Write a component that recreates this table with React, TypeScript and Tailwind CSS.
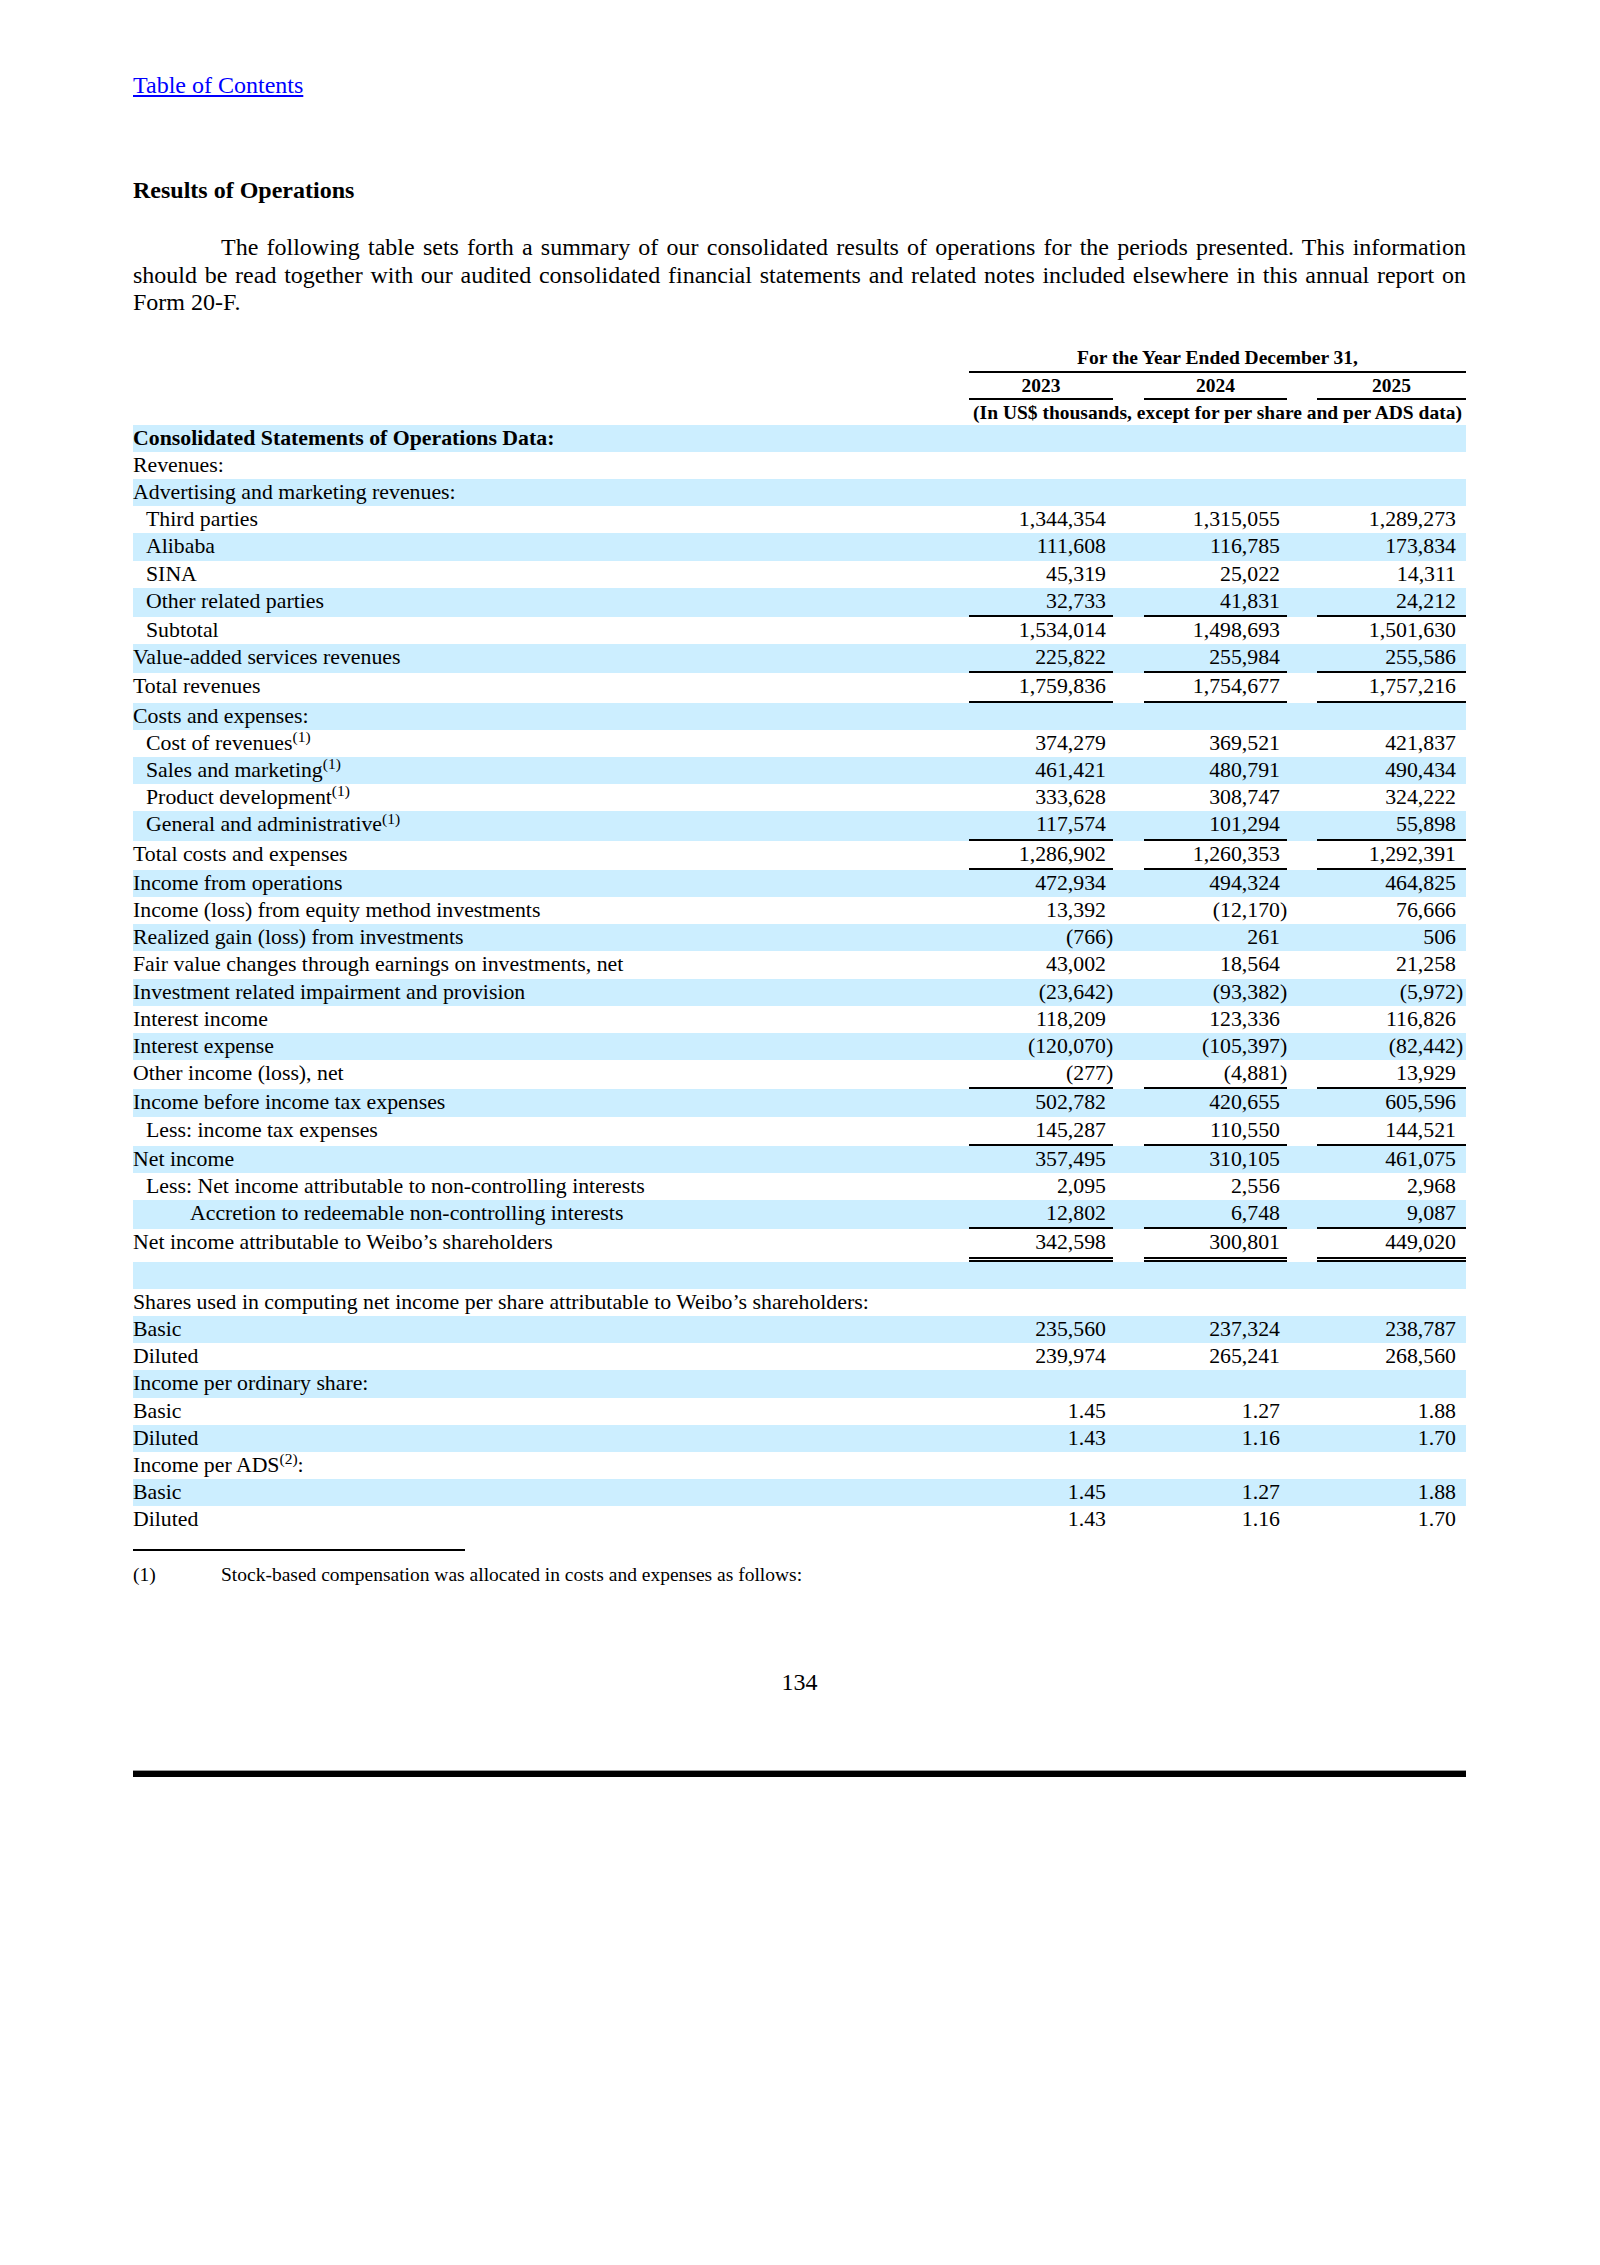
import React from 'react';

type Vals = [string, string, string];

interface Row {
  label?: React.ReactNode;
  indent?: 0 | 1 | 2;
  bold?: boolean;
  v?: Vals;
  line?: 'single' | 'double';
}

const Sup = ({ n }: { n: string }) => <sup className="text-[15.5px]">({n})</sup>;

const rows: Row[] = [
  { label: 'Consolidated Statements of Operations Data:', bold: true },
  { label: 'Revenues:' },
  { label: 'Advertising and marketing revenues:' },
  { label: 'Third parties', indent: 1, v: ['1,344,354', '1,315,055', '1,289,273'] },
  { label: 'Alibaba', indent: 1, v: ['111,608', '116,785', '173,834'] },
  { label: 'SINA', indent: 1, v: ['45,319', '25,022', '14,311'] },
  { label: 'Other related parties', indent: 1, v: ['32,733', '41,831', '24,212'], line: 'single' },
  { label: 'Subtotal', indent: 1, v: ['1,534,014', '1,498,693', '1,501,630'] },
  { label: 'Value-added services revenues', v: ['225,822', '255,984', '255,586'], line: 'single' },
  { label: 'Total revenues', v: ['1,759,836', '1,754,677', '1,757,216'], line: 'single' },
  { label: 'Costs and expenses:' },
  { label: <>Cost of revenues<Sup n="1" /></>, indent: 1, v: ['374,279', '369,521', '421,837'] },
  { label: <>Sales and marketing<Sup n="1" /></>, indent: 1, v: ['461,421', '480,791', '490,434'] },
  { label: <>Product development<Sup n="1" /></>, indent: 1, v: ['333,628', '308,747', '324,222'] },
  { label: <>General and administrative<Sup n="1" /></>, indent: 1, v: ['117,574', '101,294', '55,898'], line: 'single' },
  { label: 'Total costs and expenses', v: ['1,286,902', '1,260,353', '1,292,391'], line: 'single' },
  { label: 'Income from operations', v: ['472,934', '494,324', '464,825'] },
  { label: 'Income (loss) from equity method investments', v: ['13,392', '(12,170)', '76,666'] },
  { label: 'Realized gain (loss) from investments', v: ['(766)', '261', '506'] },
  { label: 'Fair value changes through earnings on investments, net', v: ['43,002', '18,564', '21,258'] },
  { label: 'Investment related impairment and provision', v: ['(23,642)', '(93,382)', '(5,972)'] },
  { label: 'Interest income', v: ['118,209', '123,336', '116,826'] },
  { label: 'Interest expense', v: ['(120,070)', '(105,397)', '(82,442)'] },
  { label: 'Other income (loss), net', v: ['(277)', '(4,881)', '13,929'], line: 'single' },
  { label: 'Income before income tax expenses', v: ['502,782', '420,655', '605,596'] },
  { label: 'Less: income tax expenses', indent: 1, v: ['145,287', '110,550', '144,521'], line: 'single' },
  { label: 'Net income', v: ['357,495', '310,105', '461,075'] },
  { label: 'Less: Net income attributable to non-controlling interests', indent: 1, v: ['2,095', '2,556', '2,968'] },
  { label: 'Accretion to redeemable non-controlling interests', indent: 2, v: ['12,802', '6,748', '9,087'], line: 'single' },
  { label: 'Net income attributable to Weibo’s shareholders', v: ['342,598', '300,801', '449,020'], line: 'double' },
  {},
  { label: 'Shares used in computing net income per share attributable to Weibo’s shareholders:' },
  { label: 'Basic', v: ['235,560', '237,324', '238,787'] },
  { label: 'Diluted', v: ['239,974', '265,241', '268,560'] },
  { label: 'Income per ordinary share:' },
  { label: 'Basic', v: ['1.45', '1.27', '1.88'] },
  { label: 'Diluted', v: ['1.43', '1.16', '1.70'] },
  { label: <>Income per ADS<Sup n="2" />:</> },
  { label: 'Basic', v: ['1.45', '1.27', '1.88'] },
  { label: 'Diluted', v: ['1.43', '1.16', '1.70'] },
];

const grid = 'grid grid-cols-[836px_144px_31px_143px_30px_149px]';

function Value({ value, line, last }: { value?: string; line?: Row['line']; last?: boolean }) {
  const neg = value?.startsWith('(');
  const num = neg ? value!.slice(0, -1) : value;
  const border =
    line === 'double'
      ? 'border-b-[5px] border-double border-black'
      : line === 'single'
        ? 'border-b-2 border-black'
        : '';
  return (
    <div className={`flex justify-end ${border} ${last ? 'pr-[3px]' : ''}`}>
      <span>{num}</span>
      <span className="w-[7px]">{neg ? ')' : ''}</span>
    </div>
  );
}

function DataRow({ row, blue }: { row: Row; blue: boolean }) {
  const indent = row.indent === 2 ? 'pl-[57px]' : row.indent === 1 ? 'pl-[13px]' : 'pl-0';
  return (
    <div className={`${grid} leading-[27.2px] ${blue ? 'bg-[#cceeff]' : ''}`}>
      <div className={`${indent} ${row.bold ? 'font-bold' : ''} whitespace-nowrap`}>{row.label ?? '\u00a0'}</div>
      <Value value={row.v?.[0]} line={row.line} />
      <div />
      <Value value={row.v?.[1]} line={row.line} />
      <div />
      <Value value={row.v?.[2]} line={row.line} last />
    </div>
  );
}

export default function App() {
  return (
    <div className="w-[1600px] min-h-[2265px] bg-white text-black font-['Liberation_Serif','Times_New_Roman',serif]">
      <div className="ml-[133px] w-[1333px] pt-[71px]">
        <a href="#" className="text-[24px] leading-[28px] text-[#0000ff] underline">
          Table of Contents
        </a>

        <h2 className="mt-[76px] text-[24px] leading-[28px] font-bold">Results of Operations</h2>

        <p className="mt-[30px] text-[24px] leading-[27.5px] text-justify indent-[88px]">
          The following table sets forth a summary of our consolidated results of operations for the periods presented.
          This information should be read together with our audited consolidated financial statements and related notes
          included elsewhere in this annual report on Form 20-F.
        </p>

        <div className="mt-[28px] text-[21.8px]">
          <div className="grid grid-cols-[836px_497px] text-[19.5px] font-bold">
            <div />
            <div className="text-center leading-[26px] border-b-2 border-black">For the Year Ended December 31,</div>
          </div>
          <div className={`${grid} text-[19.5px] font-bold leading-[25px]`}>
            <div />
            <div className="text-center border-b-2 border-black">2023</div>
            <div />
            <div className="text-center border-b-2 border-black">2024</div>
            <div />
            <div className="text-center border-b-2 border-black">2025</div>
          </div>
          <div className="grid grid-cols-[836px_497px] text-[19.5px] font-bold leading-[25px]">
            <div />
            <div className="text-center whitespace-nowrap">(In US$ thousands, except for per share and per ADS data)</div>
          </div>
          {rows.map((r, i) => (
            <DataRow key={i} row={r} blue={i % 2 === 0} />
          ))}
        </div>

        <div className="mt-[15px] w-[332px] h-[2px] bg-black" />
        <div className="mt-[12px] flex text-[19.5px] leading-[24px]">
          <span className="w-[88px]">(1)</span>
          <span>Stock-based compensation was allocated in costs and expenses as follows:</span>
        </div>

        <div className="mt-[81px] text-center text-[24px] leading-[28px]">134</div>

        <div className="mt-[74px] h-[7px] bg-black border-t border-[#9a9a9a]" />
      </div>
    </div>
  );
}
